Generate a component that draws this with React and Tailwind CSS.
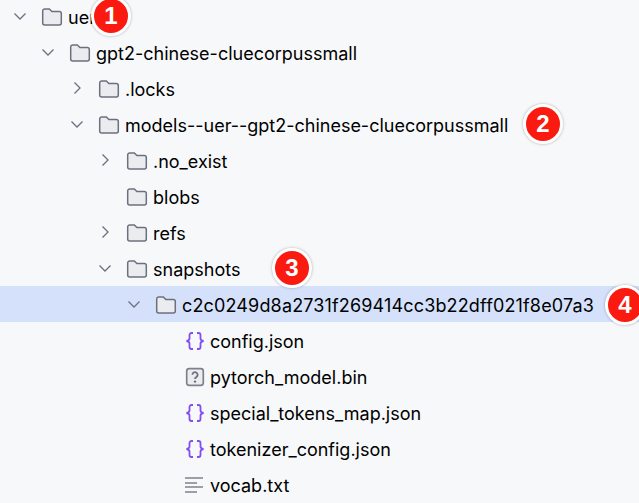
const rows = [
  { depth: 0, name: 'uer', arrow: 'down', icon: 'folder' },
  { depth: 1, name: 'gpt2-chinese-cluecorpussmall', arrow: 'down', icon: 'folder' },
  { depth: 2, name: '.locks', arrow: 'right', icon: 'folder' },
  { depth: 2, name: 'models--uer--gpt2-chinese-cluecorpussmall', arrow: 'down', icon: 'folder' },
  { depth: 3, name: '.no_exist', arrow: 'right', icon: 'folder' },
  { depth: 3, name: 'blobs', icon: 'folder' },
  { depth: 3, name: 'refs', arrow: 'right', icon: 'folder' },
  { depth: 3, name: 'snapshots', arrow: 'down', icon: 'folder' },
  { depth: 4, name: 'c2c0249d8a2731f269414cc3b22dff021f8e07a3', arrow: 'down', icon: 'folder', selected: true },
  { depth: 5, name: 'config.json', icon: 'json' },
  { depth: 5, name: 'pytorch_model.bin', icon: 'unknown' },
  { depth: 5, name: 'special_tokens_map.json', icon: 'json' },
  { depth: 5, name: 'tokenizer_config.json', icon: 'json' },
  { depth: 5, name: 'vocab.txt', icon: 'text' },
];

const badges = [
  { n: 1, className: 'left-[91px] top-[-4px]' },
  { n: 2, className: 'left-[523px] top-[104px]' },
  { n: 3, className: 'left-[272px] top-[248px]' },
  { n: 4, className: 'left-[605px] top-[285px]' },
];

function Arrow({ dir }) {
  return (
    <svg width="16" height="16" viewBox="0 0 16 16" fill="none" stroke="#6c707e" strokeWidth="1.3">
      {dir === 'down' ? <path d="M2.5 5.5 8 11l5.5-5.5" /> : <path d="M5.5 2.5 11 8l-5.5 5.5" />}
    </svg>
  );
}

function Icon({ type }) {
  if (type === 'folder') {
    return (
      <svg width="22" height="20" viewBox="0 0 22 20">
        <path
          d="M1.7 4a2 2 0 0 1 2-2h4.6l2.6 2.6h7.4a2 2 0 0 1 2 2V16a2 2 0 0 1-2 2H3.7a2 2 0 0 1-2-2z"
          fill="#ebecf0"
          stroke="#6c707e"
          strokeWidth="1.5"
        />
      </svg>
    );
  }
  if (type === 'json') {
    return (
      <svg width="20" height="20" viewBox="0 0 20 20" fill="none" stroke="#834df0" strokeWidth="1.8">
        <path d="M8 2H6.5A2 2 0 0 0 4.5 4v3.4c0 1.2-1 2.2-3 2.6 2 .4 3 1.4 3 2.6V16a2 2 0 0 0 2 2H8" />
        <path d="M12 2h1.5a2 2 0 0 1 2 2v3.4c0 1.2 1 2.2 3 2.6-2 .4-3 1.4-3 2.6V16a2 2 0 0 1-2 2H12" />
      </svg>
    );
  }
  if (type === 'unknown') {
    return (
      <svg width="20" height="20" viewBox="0 0 20 20">
        <rect x="1.7" y="1.7" width="16.6" height="16.6" rx="2.5" fill="#ebecf0" stroke="#7d818e" strokeWidth="1.7" />
        <path d="M7.4 7.8a2.6 2.6 0 1 1 4 2.2c-.9.6-1.4 1-1.4 2" fill="none" stroke="#6c707e" strokeWidth="1.8" />
        <circle cx="10" cy="14.6" r="1.2" fill="#6c707e" />
      </svg>
    );
  }
  return (
    <svg width="20" height="20" viewBox="0 0 20 20" fill="none" stroke="#7d818e" strokeWidth="1.5">
      <path d="M0 3h18M0 8h12M0 12h18M0 17h12" />
    </svg>
  );
}

const indent = {
  0: 'pl-[12px]',
  1: 'pl-[40px]',
  2: 'pl-[69px]',
  3: 'pl-[97px]',
  4: 'pl-[126px]',
  5: 'pl-[185px]',
};

export default function App() {
  return (
    <div className="relative h-[503px] w-[639px] overflow-hidden bg-[#f7f8fa] font-['Inter',sans-serif] text-[18px] text-black">
      <div className="-mt-[2px]">
        {rows.map((row) => (
          <div
            key={row.name}
            className={`flex h-[36px] items-center ${indent[row.depth]} ${row.selected ? 'bg-[#d5e1fb]' : ''}`}
          >
            {row.arrow && <span className="mr-[13px] flex w-[16px]"><Arrow dir={row.arrow} /></span>}
            {!row.arrow && row.depth < 5 && <span className="mr-[13px] w-[16px]" />}
            <span className="mr-[5px] flex shrink-0 pt-[2px]"><Icon type={row.icon} /></span>
            <span className={`whitespace-nowrap pt-[2px] ${row.selected ? 'tracking-[0.15px]' : ''}`}>{row.name}</span>
          </div>
        ))}
      </div>
      {badges.map((b) => (
        <div
          key={b.n}
          className={`absolute flex h-[40px] w-[40px] items-center justify-center rounded-full border-[3px] border-white bg-[#fb1a0f] font-['Liberation_Sans',sans-serif] text-[24px] leading-none font-bold text-white shadow-[0_0_3px_rgba(0,0,0,0.3)] ${b.className}`}
        >
          {b.n}
        </div>
      ))}
    </div>
  );
}
